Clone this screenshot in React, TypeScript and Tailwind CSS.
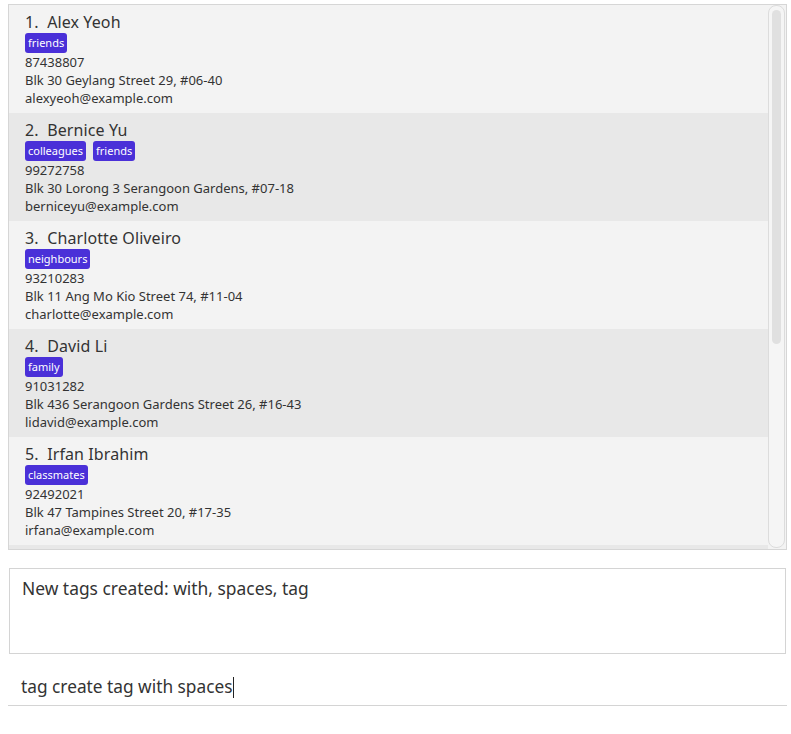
import React from "react";

type Person = { name: string; tags: string[]; phone: string; address: string; email: string };

const people: Person[] = [
  { name: "Alex Yeoh", tags: ["friends"], phone: "87438807", address: "Blk 30 Geylang Street 29, #06-40", email: "alexyeoh@example.com" },
  { name: "Bernice Yu", tags: ["colleagues", "friends"], phone: "99272758", address: "Blk 30 Lorong 3 Serangoon Gardens, #07-18", email: "berniceyu@example.com" },
  { name: "Charlotte Oliveiro", tags: ["neighbours"], phone: "93210283", address: "Blk 11 Ang Mo Kio Street 74, #11-04", email: "charlotte@example.com" },
  { name: "David Li", tags: ["family"], phone: "91031282", address: "Blk 436 Serangoon Gardens Street 26, #16-43", email: "lidavid@example.com" },
  { name: "Irfan Ibrahim", tags: ["classmates"], phone: "92492021", address: "Blk 47 Tampines Street 20, #17-35", email: "irfana@example.com" },
];

function Card({ p, i }: { p: Person; i: number }) {
  return (
    <div className={`shrink-0 h-[108px] pl-[16px] pt-[6px] overflow-hidden ${i % 2 === 0 ? "bg-[#f3f3f3]" : "bg-[#e8e8e8]"}`}>
      <div className="text-[16px] leading-[22px] text-[#333] tracking-[0.1px]">
        {i + 1}.&nbsp;&nbsp;{p.name}
      </div>
      <div className="flex gap-[7px] h-[20px]">
        {p.tags.map((t) => (
          <span key={t} className="h-[20px] px-[3px] rounded-[3px] bg-[#4a30d8] text-white text-[11px] leading-[20px]">
            {t}
          </span>
        ))}
      </div>
      <div className="text-[13px] leading-[18px] text-[#333]">{p.phone}</div>
      <div className="text-[13px] leading-[18px] text-[#333]">{p.address}</div>
      <div className="text-[13px] leading-[18px] text-[#333]">{p.email}</div>
    </div>
  );
}

export default function App() {
  return (
    <div className="w-[791px] h-[734px] bg-white overflow-hidden" style={{ fontFamily: '"Noto Sans", "Open Sans", sans-serif' }}>
      <div className="h-[4px]" />
      <div className="ml-[8px] w-[779px] h-[546px] border border-[#d6d6d6] bg-[#f3f3f3] flex">
        <div className="flex-1 flex flex-col overflow-hidden">
          {people.map((p, i) => (
            <Card key={i} p={p} i={i} />
          ))}
          <div className="flex-1 bg-[#e8e8e8]" />
        </div>
        <div className="w-[18px] shrink-0 bg-[#f3f3f3] flex pr-[1px] pb-[1px]">
          <div className="w-[17px] h-full border border-[#dcdcdc] rounded-[8px] bg-[#f5f5f5] flex justify-center pt-[4px]">
            <div className="w-[9px] h-[334px] rounded-[5px] bg-[#e0e0e0]" />
          </div>
        </div>
      </div>
      <div className="ml-[9px] w-[777px] mt-[18px] h-[86px] border border-[#d4d4d4] bg-white px-[12px] pt-[7px]">
        <div className="text-[17.4px] leading-[24px] text-[#333]">New tags created: with, spaces, tag</div>
      </div>
      <div className="ml-[8px] w-[779px] mt-[16px] h-[36px] border-b border-[#d4d4d4] pl-[13px] flex items-start">
        <div className="text-[17.3px] leading-[34px] text-[#333] flex items-center">
          tag create tag with spaces
          <span className="inline-block w-[1px] h-[21px] bg-[#222]" />
        </div>
      </div>
    </div>
  );
}
